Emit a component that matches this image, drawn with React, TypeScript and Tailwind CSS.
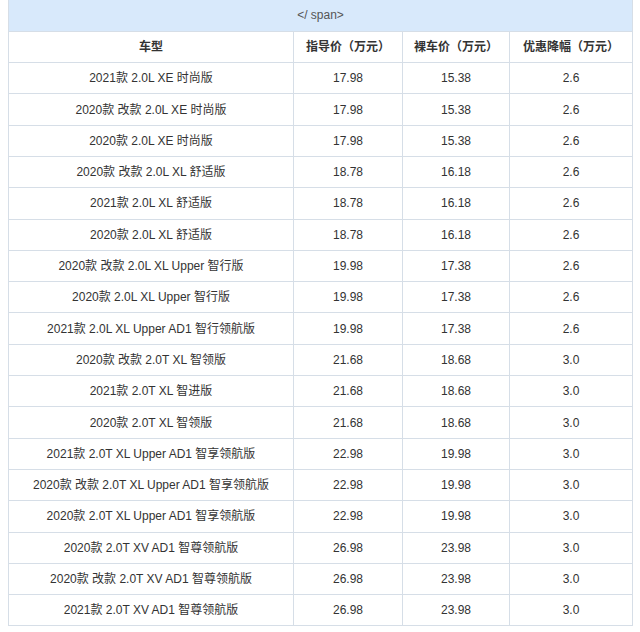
const rows: [string, string, string, string][] = [
  ["2021款 2.0L XE 时尚版", "17.98", "15.38", "2.6"],
  ["2020款 改款 2.0L XE 时尚版", "17.98", "15.38", "2.6"],
  ["2020款 2.0L XE 时尚版", "17.98", "15.38", "2.6"],
  ["2020款 改款 2.0L XL 舒适版", "18.78", "16.18", "2.6"],
  ["2021款 2.0L XL 舒适版", "18.78", "16.18", "2.6"],
  ["2020款 2.0L XL 舒适版", "18.78", "16.18", "2.6"],
  ["2020款 改款 2.0L XL Upper 智行版", "19.98", "17.38", "2.6"],
  ["2020款 2.0L XL Upper 智行版", "19.98", "17.38", "2.6"],
  ["2021款 2.0L XL Upper AD1 智行领航版", "19.98", "17.38", "2.6"],
  ["2020款 改款 2.0T XL 智领版", "21.68", "18.68", "3.0"],
  ["2021款 2.0T XL 智进版", "21.68", "18.68", "3.0"],
  ["2020款 2.0T XL 智领版", "21.68", "18.68", "3.0"],
  ["2021款 2.0T XL Upper AD1 智享领航版", "22.98", "19.98", "3.0"],
  ["2020款 改款 2.0T XL Upper AD1 智享领航版", "22.98", "19.98", "3.0"],
  ["2020款 2.0T XL Upper AD1 智享领航版", "22.98", "19.98", "3.0"],
  ["2020款 2.0T XV AD1 智尊领航版", "26.98", "23.98", "3.0"],
  ["2020款 改款 2.0T XV AD1 智尊领航版", "26.98", "23.98", "3.0"],
  ["2021款 2.0T XV AD1 智尊领航版", "26.98", "23.98", "3.0"],
];

const headers = ["车型", "指导价（万元）", "裸车价（万元）", "优惠降幅（万元）"];

export default function App() {
  return (
    <div className="w-[640px] h-[632px] bg-white font-['Liberation_Sans','Noto_Sans_CJK_SC',sans-serif] text-[12px] text-[#333]">
      <table className="ml-2 w-[624px] table-fixed border-collapse">
        <colgroup>
          <col className="w-[285px]" />
          <col className="w-[109px]" />
          <col className="w-[107px]" />
          <col className="w-[123px]" />
        </colgroup>
        <thead>
          <tr className="h-[31.3px] bg-[#d8e9fb]">
            <th
              colSpan={4}
              className="border border-[#d6dee7] border-t-0 text-center font-normal text-[#555]"
            >
              &lt;/ span&gt;
            </th>
          </tr>
          <tr className="h-[31.3px]">
            {headers.map((h) => (
              <th key={h} className="border border-[#d6dee7] text-center font-bold">
                {h}
              </th>
            ))}
          </tr>
        </thead>
        <tbody>
          {rows.map((r, i) => (
            <tr key={i} className="h-[31.3px]">
              {r.map((c, j) => (
                <td key={j} className="border border-[#d6dee7] text-center whitespace-nowrap">
                  {c}
                </td>
              ))}
            </tr>
          ))}
        </tbody>
      </table>
    </div>
  );
}
